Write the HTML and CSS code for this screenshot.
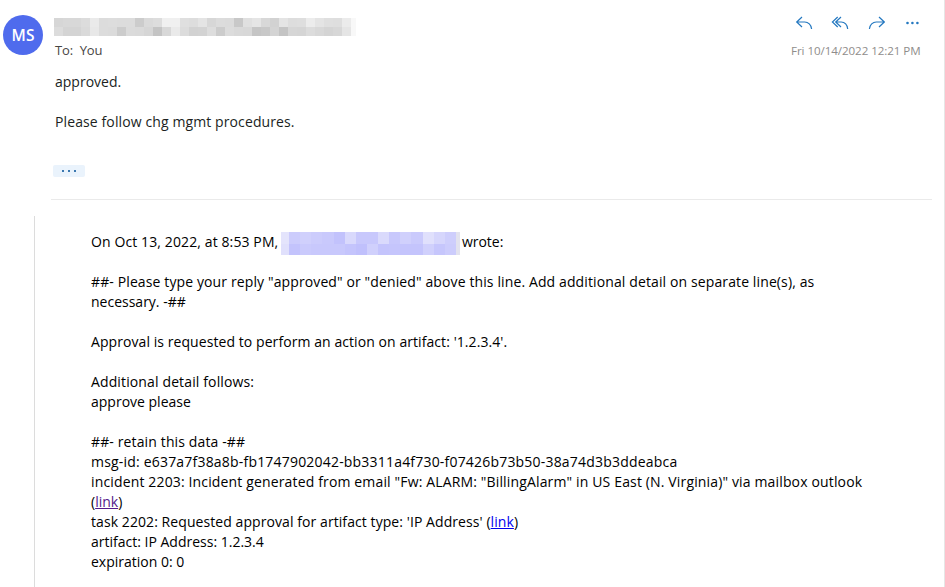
FILE: index.html
```html
<!DOCTYPE html>
<html lang="en">
<head>
<meta charset="utf-8">
<title>Message</title>
<link rel="stylesheet" href="styles.css">
</head>
<body>
<main class="message">
  <header class="head">
    <div class="avatar">MS</div>
    <div class="sender">
      <div class="mosaic name" data-rows="name"></div>
      <div class="to">To:&nbsp; You</div>
    </div>
    <div class="side">
      <div class="actions">
        <svg width="18" height="14" viewBox="0 0 18 14"><path d="M7 1 1.700 6 7 11M1.900 6h7.800c3.400 0 6.600 2.700 6.900 7"/></svg>
        <svg width="18" height="14" viewBox="0 0 18 14"><path d="M6.700 1 1.400 6l5.300 5M10 1 4.700 6 10 11M4.900 6h5.300c3.400 0 6.300 2.700 6.500 7"/></svg>
        <svg width="18" height="14" viewBox="0 0 18 14"><path d="m12 1 5.300 5L12 11M17.100 6H9.300C5.900 6 2.700 8.700 2.400 13"/></svg>
        <svg class="dots" width="18" height="14" viewBox="0 0 18 14"><circle cx="4.500" cy="7" r="1.300"/><circle cx="9.400" cy="7" r="1.300"/><circle cx="14.400" cy="7" r="1.300"/></svg>
      </div>
      <div class="date">Fri 10/14/2022 12:21 PM</div>
    </div>
  </header>
  <section class="reply">
    <p>approved.</p>
    <p class="gap l2b">Please follow chg mgmt procedures.</p>
    <div class="more"><i></i><i></i><i></i></div>
  </section>
  <hr>
  <blockquote>
    <p class="wrote"><span class="l1">On Oct 13, 2022, at 8:53 PM,</span><span class="mosaic address" data-rows="address"></span><span class="l2">wrote:</span></p>
    <p class="gap"><span class="l3">##- Please type your reply "approved" or "denied" above this line. Add additional detail on separate line(s), as</span><br><span class="l4">necessary. -##</span></p>
    <p class="gap"><span class="l5">Approval is requested to perform an action on artifact: '1.2.3.4'.</span></p>
    <p class="gap"><span class="l6">Additional detail follows:</span><br><span class="l7">approve please</span></p>
    <p class="gap"><span class="l8">##- retain this data -##</span><br><span class="l9">msg-id: e637a7f38a8b-fb1747902042-bb3311a4f730-f07426b73b50-38a74d3b3ddeabca</span><br><span class="l10">incident 2203: Incident generated from email "Fw: ALARM: "BillingAlarm" in US East (N. Virginia)" via mailbox outlook</span><br><span class="l11">(<a class="visited" href="#incident">link</a>)</span><br><span class="l12">task 2202: Requested approval for artifact type: 'IP Address' (<a href="#task">link</a>)</span><br><span class="l13">artifact: IP Address: 1.2.3.4</span><br><span class="l14">expiration 0: 0</span></p>
  </blockquote>
</main>
<script src="mosaic.js"></script>
</body>
</html>
```
FILE: styles.css
```css
* { box-sizing: border-box; }
body { margin: 0; background: #fff; font: 14px/20px "Open Sans", "Noto Sans", sans-serif; color: #000; overflow: hidden; }
p { margin: 0; white-space: nowrap; }
.message { width: 945px; height: 587px; border-right: 1px solid #e6e6e6; display: flex; flex-direction: column; }
.head { height: 72px; display: flex; padding: 15px 22px 0 3px; flex: none; }
.avatar { width: 40px; height: 40px; border-radius: 50%; background: #4f6bed; color: #fff; font-size: 15.5px; font-weight: 600; line-height: 40px; text-align: center; }
.sender { margin-left: 11px; padding-top: 3px; }
.mosaic { display: grid; flex: none; }
.name { grid-template-columns: repeat(33, 9px) 5px; grid-template-rows: 9px 9px; }
.to { margin: 4px 0 0 1px; font-size: 13px; letter-spacing: -.1px; color: #484644; }
.side { margin-left: auto; width: 131px; }
.actions { display: flex; gap: 18px; height: 16px; margin: 1px 0 0 4px; }
.actions svg { flex: none; fill: none; stroke: #2478c0; stroke-width: 1.2; }
.actions .dots { fill: #2478c0; stroke: none; }
.date { font-size: 11.6px; color: #8f8d8b; margin-top: 9px; letter-spacing: -.07px; white-space: nowrap; }
.reply { padding-left: 55px; height: 127px; flex: none; color: #201f1e; }
.gap { margin-top: 20px; }
.more { width: 32px; height: 12px; margin: 33px 0 0 -2px; background: #eaf3fc; border-radius: 2px; display: flex; gap: 4px; justify-content: center; align-items: center; }
.more i { width: 2px; height: 2px; background: #3b78b0; }
hr { width: 881px; height: 1px; margin: 0 0 0 51px; border: 0; background: #eaeaea; flex: none; }
blockquote { margin: 16px 0 0 34px; padding: 16px 0 0 56px; border-left: 1px solid #dcdcdc; flex: 1; }
.wrote { display: flex; height: 20px; }
.l1 { width: 190px; letter-spacing: .11px; }
.l2b { letter-spacing: .11px; }
.l3 { letter-spacing: .117px; }
.l5 { letter-spacing: .07px; }
.l6, .l8 { letter-spacing: .13px; }
.l9 { letter-spacing: .195px; }
.l10 { letter-spacing: .147px; }
.l12 { letter-spacing: .075px; }
.address { grid-template-columns: 8px repeat(15, 11.133px) 4px; grid-template-rows: 12px 11px; height: 23px; }
.l2 { margin-left: 2px; }
a { color: #0000ee; }
.visited { color: #551a8b; }
```
FILE: mosaic.js
```js
const palettes = {
  name: [
    "d6 d8 d8 dc ea dc dd dc dc cc da dd f0 f0 df dd e4 d7 dc db c8 e0 e5 d8 d2 e4 dd de ec e4 df de eb f8",
    "dc d4 d4 da e8 dc db cc db da d6 c4 d8 ea dc d2 d3 dd cc dc d9 d8 c5 c8 d4 c4 d6 d5 dc d8 d4 d7 e5 f8"
  ],
  address: [
    "e4 cc d0 cc c9 c2 d9 c8 c8 da c8 d0 ca e0 d6 ce e2",
    "e0 c3 ca c8 c8 c8 c4 c0 d0 c4 c5 c4 c4 d0 c6 cc e2"
  ]
};
document.querySelectorAll(".mosaic").forEach(el => {
  const kind = el.dataset.rows;
  palettes[kind].forEach(row => {
    const cells = row.split(" ");
    cells.forEach((v, i) => {
      const cell = document.createElement("span");
      const blue = kind === "name" ? v : i === cells.length - 1 ? "ee" : "fc";
      cell.style.background = "#" + v + v + blue;
      el.append(cell);
    });
  });
});
```
